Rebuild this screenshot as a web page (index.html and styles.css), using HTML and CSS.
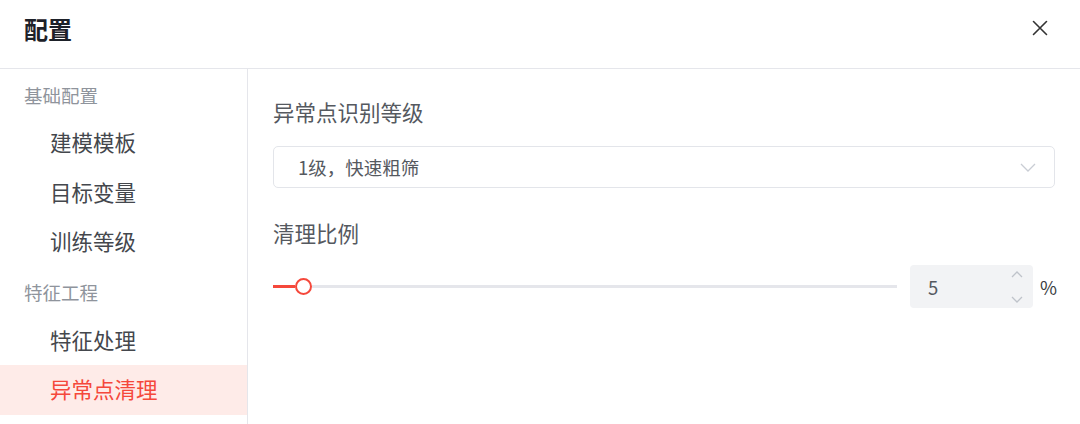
FILE: index.html
```html
<!DOCTYPE html>
<html lang="zh-CN">
<head>
<meta charset="utf-8">
<title>配置</title>
<link rel="stylesheet" href="styles.css">
</head>
<body>
<div class="dialog">
  <header class="header">
    <h1 class="title">配置</h1>
    <button class="close" aria-label="关闭">
      <svg width="16" height="16" viewBox="0 0 16 16"><path d="M1.5 1.5 L14.5 14.5 M14.5 1.5 L1.5 14.5" stroke="#333" stroke-width="1.6" fill="none" stroke-linecap="round"/></svg>
    </button>
  </header>
  <div class="body">
    <nav class="sidebar">
      <div class="group">基础配置</div>
      <div class="item">建模模板</div>
      <div class="item">目标变量</div>
      <div class="item">训练等级</div>
      <div class="group group-2">特征工程</div>
      <div class="item">特征处理</div>
      <div class="item active">异常点清理</div>
    </nav>
    <main class="content">
      <div class="label">异常点识别等级</div>
      <div class="select">
        <span class="select-text">1级，快速粗筛</span>
        <svg class="chev" width="16" height="9" viewBox="0 0 16 9"><path d="M1 1 L8 8 L15 1" stroke="#c9cdd4" stroke-width="1.3" fill="none"/></svg>
      </div>
      <div class="label label-2">清理比例</div>
      <div class="slider-row">
        <div class="slider">
          <div class="fill"></div>
          <div class="thumb"></div>
          <div class="track"></div>
        </div>
        <div class="number">
          <span class="num-val">5</span>
          <div class="steps">
            <svg width="12" height="7" viewBox="0 0 12 7"><path d="M1 6 L6 1 L11 6" stroke="#bfc3ca" stroke-width="1.3" fill="none"/></svg>
            <svg width="12" height="7" viewBox="0 0 12 7"><path d="M1 1 L6 6 L11 1" stroke="#bfc3ca" stroke-width="1.3" fill="none"/></svg>
          </div>
        </div>
        <span class="unit">%</span>
      </div>
    </main>
  </div>
</div>
</body>
</html>
```

FILE: styles.css
```css
* { box-sizing: border-box; }
html, body { margin: 0; padding: 0; background: #fff; }
body {
  font-family: "Noto Sans CJK SC", "Noto Sans", sans-serif;
  width: 1080px;
  height: 424px;
  overflow: hidden;
}
.dialog { display: flex; flex-direction: column; height: 424px; }
.header {
  height: 69px;
  border-bottom: 1px solid #e5e6eb;
  display: flex;
  justify-content: space-between;
  align-items: flex-start;
  padding: 12px 32px 0 24px;
}
.title {
  margin: 0;
  font-size: 24px;
  line-height: 34px;
  font-weight: 700;
  color: #1d2129;
}
.close {
  border: none;
  background: none;
  padding: 0;
  margin-top: 8px;
  width: 16px;
  height: 16px;
  display: flex;
}
.body { flex: 1; display: flex; }
.sidebar {
  width: 248px;
  border-right: 1px solid #e5e6eb;
  padding-top: 3px;
}
.group {
  height: 46px;
  line-height: 46px;
  padding-left: 24px;
  font-size: 18.5px;
  color: #8f949c;
}
.group-2 { height: 49px; line-height: 50px; }
.item {
  height: 49.5px;
  line-height: 48px;
  padding-left: 50px;
  font-size: 21.5px;
  color: #44474d;
}
.item.active {
  background: #feebe8;
  color: #f5483b;
}
.content {
  flex: 1;
  padding: 28px 25px 0 25px;
}
.label {
  font-size: 21.5px;
  line-height: 30px;
  color: #55595f;
}
.select {
  margin-top: 19px;
  height: 42px;
  border: 1px solid #e3e5ea;
  border-radius: 5px;
  display: flex;
  align-items: center;
  justify-content: space-between;
  padding: 0 18px 0 24px;
}
.select-text { font-size: 18.5px; color: #55595f; }
.chev { display: block; }
.label-2 { margin-top: 30px; }
.slider-row {
  margin-top: 17px;
  display: flex;
  align-items: center;
  height: 43px;
}
.slider {
  flex: 1;
  display: flex;
  align-items: center;
  height: 20px;
}
.fill { width: 22px; height: 3px; background: #f5483b; }
.thumb {
  width: 17px;
  height: 17px;
  border-radius: 50%;
  border: 2.6px solid #f5483b;
  background: #fff;
  flex: none;
}
.track { flex: 1; height: 3px; background: #e5e6eb; }
.number {
  margin-left: 13px;
  width: 123px;
  height: 43px;
  background: #f2f3f5;
  border-radius: 4px;
  display: flex;
  align-items: center;
  justify-content: space-between;
  padding: 0 10px 0 18px;
  flex: none;
}
.num-val { font-size: 18.5px; color: #55595f; }
.steps {
  display: flex;
  flex-direction: column;
  justify-content: space-between;
  height: 32px;
}
.steps svg { display: block; }
.unit {
  margin-left: 7px;
  width: 15px;
  font-size: 18.5px;
  color: #3a3d42;
  flex: none;
}
```
